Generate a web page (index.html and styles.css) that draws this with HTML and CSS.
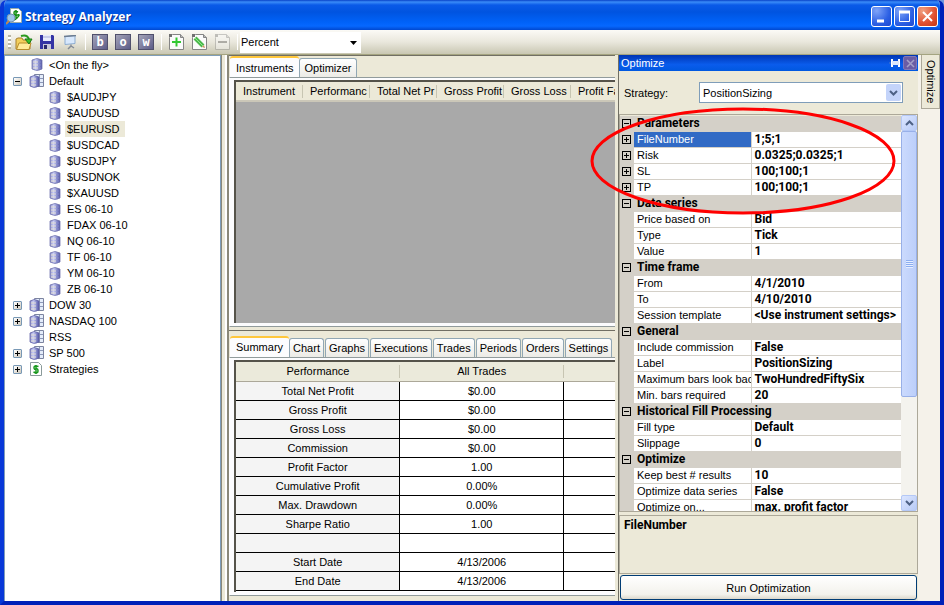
FILE: index.html
```
<!DOCTYPE html>
<html lang="en">
<head>
    <meta charset="utf-8">
    <title>Strategy Analyzer</title>
    <link rel="stylesheet" href="styles.css">
</head>
<body>
    <svg class="defs" width="0" height="0" aria-hidden="true">
        <defs>
            <linearGradient id="steel" x1="0" x2="1" y1="0" y2="0">
                <stop offset="0" stop-color="#8c8ec4"/>
                <stop offset=".35" stop-color="#ccd0f8"/>
                <stop offset="1" stop-color="#5054a4"/>
            </linearGradient>
        </defs>
        <symbol id="db" viewBox="0 0 12 13">
            <path d="M1 2Q6-1 11 2V11Q6 14 1 11Z" fill="url(#steel)" stroke="#7476b0" stroke-width=".8"/>
            <path d="M2 4h5M2 7h5M2 10h5" stroke="#e4e0d4"/>
            <path d="M7 4h3M7 7h3M7 10h3" stroke="#8488cc"/>
        </symbol>
        <symbol id="group" viewBox="0 0 15 14">
            <path d="M5.500.5h9v12h-9z" fill="#e4ecfa" stroke="#7c84a0"/>
            <path d="M10.500 1v11M6 4.500h8M6 8.500h8" stroke="#8c98b8"/>
            <path d="M1 3Q5 0 10 3V12Q5 15 1 12Z" fill="url(#steel)" stroke="#6466a8" stroke-width=".8"/>
            <path d="M2 5h5M2 8h5M2 11h5" stroke="#e4e0d4"/>
        </symbol>
        <symbol id="page" viewBox="0 0 15 16">
            <path d="M3.500.5h8l3 3v12h-14v-12z" fill="#fbfbfb" stroke="#858585"/>
            <path d="M0 0h3v3H0z" fill="#707070"/>
            <path d="M11.500.5v3h3" fill="#bbb" stroke="#858585"/>
        </symbol>
        <symbol id="down" viewBox="0 0 9 6">
            <path d="M1 1l3.500 3.500L8 1" fill="none" stroke="#4d6185" stroke-width="2"/>
        </symbol>
    </svg>

    <div class="window">
        <header class="titlebar">
            <svg class="app-icon" width="16" height="17" viewBox="0 0 16 17">
                <path d="M4.500.5h8l3 3v11h-11z" fill="#fff" stroke="#9aa"/>
                <path d="M12 4Q8 2 8 5t3.500 2T11 10 8 9M10 2v9" fill="none" stroke="#159015" stroke-width="1.500"/>
                <circle cx="5" cy="10" r="4" fill="#9ec6e8" stroke="#7795b0"/>
                <path d="M3 13L0 16" stroke="#c08850" stroke-width="2"/>
            </svg>
            <h1>Strategy Analyzer</h1>
            <div class="window-buttons">
                <button class="win-btn" aria-label="Minimize"><svg width="13" height="13"><path d="M2 11h7" stroke="#fff" stroke-width="3"/></svg></button>
                <button class="win-btn" aria-label="Maximize"><svg width="13" height="13"><path d="M1.500 2v9.500h10V2M1 2.500h11" fill="none" stroke="#fff"/><path d="M1 2h11" stroke="#fff" stroke-width="3"/></svg></button>
                <button class="win-btn win-close" aria-label="Close"><svg width="13" height="13"><path d="M2 2l9 9M11 2l-9 9" stroke="#fff" stroke-width="2"/></svg></button>
            </div>
        </header>

        <div class="toolbar">
            <span class="grip"></span>
            <button class="tool" aria-label="Open"><svg width="18" height="17" viewBox="0 0 18 17"><path d="M1 15V5l2-1h4l1 2h7v9z" fill="#f3cf5c" stroke="#a8802c"/><path d="M1.500 15.500L4 9h12l-2 6.500z" fill="#ffeb9a" stroke="#b88c2c"/><path d="M6 2Q12 0 14 5" fill="none" stroke="#2c9a20" stroke-width="2"/><path d="M10 5h7l-3 5z" fill="#3cc028" stroke="#187a18"/></svg></button>
            <button class="tool" aria-label="Save"><svg width="14" height="14" viewBox="0 0 14 14"><path d="M0 0h13l1 1v13H0z" fill="#3434a4"/><path d="M3 0h8v6H3z" fill="#e8ecfc"/><path d="M3 2h8" stroke="#a8acd8"/><path d="M3 9h8v5H3z" fill="#c8c8d8"/><path d="M4 10h3v4H4z" fill="#28286c"/></svg></button>
            <button class="tool" aria-label="Display"><svg width="14" height="15" viewBox="0 0 14 15"><path d="M2 1.500l10-1v8l-10 1z" fill="#d8e8fc" stroke="#8cacd0"/><path d="M1 1.500l12-1" stroke="#6c7c90" stroke-width="1.500"/><path d="M8 9.500v2M5 14l3-3 3 2" fill="none" stroke="#848c98" stroke-width="1.500"/></svg></button>
            <span class="separator"></span>
            <button class="tool letter">b</button>
            <button class="tool letter">o</button>
            <button class="tool letter">w</button>
            <span class="separator"></span>
            <button class="tool" aria-label="Add"><svg width="15" height="16" viewBox="0 0 15 16"><use href="#page"/><path d="M3 8h9M7.500 3.500v9" stroke="#32c832" stroke-width="2"/></svg></button>
            <button class="tool" aria-label="Edit"><svg width="15" height="16" viewBox="0 0 15 16"><use href="#page"/><path d="M3 4l8 8" stroke="#4cb84c" stroke-width="4"/><path d="M3 4l8 8" stroke="#8ce88c"/><path d="M10 13l3 1-1-3z" fill="#d09060"/></svg></button>
            <button class="tool faded" aria-label="Remove"><svg width="15" height="16" viewBox="0 0 15 16"><use href="#page"/><path d="M3 8h9" stroke="#555" stroke-width="2"/></svg></button>
            <span class="separator"></span>
            <div class="unit-select">
                <select aria-label="Display unit"><option>Percent</option></select>
                <svg width="7" height="4"><path d="M0 0h7L3.500 4z"/></svg>
            </div>
        </div>

        <div class="workspace">
            <nav class="tree">
                <ul>
                    <li><span class="node"><span class="toggle-space"></span><svg class="icon"><use href="#db" x="2" width="12" height="13"/></svg><span class="name">&lt;On the fly&gt;</span></span></li>
                    <li><span class="node"><button class="toggle minus" aria-label="Collapse"></button><svg class="icon"><use href="#group" width="15" height="14"/></svg><span class="name">Default</span></span>
                        <ul class="children">
                            <li class="node"><svg class="icon small"><use href="#db"/></svg><span class="name">$AUDJPY</span></li>
                            <li class="node"><svg class="icon small"><use href="#db"/></svg><span class="name">$AUDUSD</span></li>
                            <li class="node"><svg class="icon small"><use href="#db"/></svg><span class="name selected">$EURUSD</span></li>
                            <li class="node"><svg class="icon small"><use href="#db"/></svg><span class="name">$USDCAD</span></li>
                            <li class="node"><svg class="icon small"><use href="#db"/></svg><span class="name">$USDJPY</span></li>
                            <li class="node"><svg class="icon small"><use href="#db"/></svg><span class="name">$USDNOK</span></li>
                            <li class="node"><svg class="icon small"><use href="#db"/></svg><span class="name">$XAUUSD</span></li>
                            <li class="node"><svg class="icon small"><use href="#db"/></svg><span class="name">ES 06-10</span></li>
                            <li class="node"><svg class="icon small"><use href="#db"/></svg><span class="name">FDAX 06-10</span></li>
                            <li class="node"><svg class="icon small"><use href="#db"/></svg><span class="name">NQ 06-10</span></li>
                            <li class="node"><svg class="icon small"><use href="#db"/></svg><span class="name">TF 06-10</span></li>
                            <li class="node"><svg class="icon small"><use href="#db"/></svg><span class="name">YM 06-10</span></li>
                            <li class="node"><svg class="icon small"><use href="#db"/></svg><span class="name">ZB 06-10</span></li>
                        </ul>
                    </li>
                    <li><span class="node"><button class="toggle" aria-label="Expand"></button><svg class="icon"><use href="#group" width="15" height="14"/></svg><span class="name">DOW 30</span></span></li>
                    <li><span class="node"><button class="toggle" aria-label="Expand"></button><svg class="icon"><use href="#group" width="15" height="14"/></svg><span class="name">NASDAQ 100</span></span></li>
                    <li><span class="node"><span class="toggle-space"></span><svg class="icon"><use href="#group" width="15" height="14"/></svg><span class="name">RSS</span></span></li>
                    <li><span class="node"><button class="toggle" aria-label="Expand"></button><svg class="icon"><use href="#group" width="15" height="14"/></svg><span class="name">SP 500</span></span></li>
                    <li><span class="node"><button class="toggle" aria-label="Expand"></button><svg class="icon" viewBox="0 0 15 14"><path d="M1.500.5h8l3 3v10h-11z" fill="#fff" stroke="#8a9a9a"/><path d="M9.500 4.500Q5 3 5 5.500T7 7t2 2-4.500 1M7 3v9" fill="none" stroke="#18981c" stroke-width="1.500"/></svg><span class="name">Strategies</span></span></li>
                </ul>
            </nav>

            <div class="splitter"></div>

            <main class="center">
                <section class="pane instruments">
                    <div class="tabs">
                        <button class="tab active">Instruments</button>
                        <button class="tab">Optimizer</button>
                    </div>
                    <div class="sheet">
                        <div class="well gray">
                            <table class="columns">
                                <tr><th>Instrument</th><th>Performanc</th><th>Total Net Pr</th><th>Gross Profit</th><th>Gross Loss</th><th>Profit Fa</th></tr>
                            </table>
                        </div>
                    </div>
                </section>
                <section class="pane results">
                    <div class="tabs">
                        <button class="tab active">Summary</button>
                        <button class="tab">Chart</button>
                        <button class="tab">Graphs</button>
                        <button class="tab">Executions</button>
                        <button class="tab">Trades</button>
                        <button class="tab">Periods</button>
                        <button class="tab">Orders</button>
                        <button class="tab">Settings</button>
                    </div>
                    <div class="sheet">
                        <div class="well">
                            <table class="summary">
                                <thead><tr><th>Performance</th><th>All Trades</th><th></th></tr></thead>
                                <tbody>
                                    <tr><th>Total Net Profit</th><td>$0.00</td><td></td></tr>
                                    <tr><th>Gross Profit</th><td>$0.00</td><td></td></tr>
                                    <tr><th>Gross Loss</th><td>$0.00</td><td></td></tr>
                                    <tr><th>Commission</th><td>$0.00</td><td></td></tr>
                                    <tr><th>Profit Factor</th><td>1.00</td><td></td></tr>
                                    <tr><th>Cumulative Profit</th><td>0.00%</td><td></td></tr>
                                    <tr><th>Max. Drawdown</th><td>0.00%</td><td></td></tr>
                                    <tr><th>Sharpe Ratio</th><td>1.00</td><td></td></tr>
                                    <tr><th></th><td></td><td></td></tr>
                                    <tr><th>Start Date</th><td>4/13/2006</td><td></td></tr>
                                    <tr><th>End Date</th><td>4/13/2006</td><td></td></tr>
                                </tbody>
                            </table>
                        </div>
                    </div>
                </section>
            </main>

            <aside class="optimize">
                <div class="panel-title">
                    <h2>Optimize</h2>
                    <button class="pin" aria-label="Auto hide"><svg width="11" height="10"><path d="M0 5h3" stroke="#4a78c8"/><path d="M3 1v8M10 1v8" stroke="#fff" stroke-width="2"/><path d="M3 3h7v4H3z" fill="#dce8fc"/></svg></button>
                    <button class="panel-close" aria-label="Close panel"><svg width="9" height="9"><path d="M1 1l7 7M8 1L1 8" stroke="#a4a0c8" stroke-width="1.500"/></svg></button>
                </div>
                <div class="strategy">
                    <label for="strategy">Strategy:</label>
                    <div class="strategy-select">
                        <select id="strategy"><option>PositionSizing</option></select>
                        <span class="arrow"><svg width="9" height="6"><use href="#down"/></svg></span>
                    </div>
                </div>
                <div class="properties">
                    <div class="property-view">
                        <table class="property-grid">
                            <colgroup><col class="col-gutter"><col class="col-name"><col></colgroup>
                            <tr class="category"><td class="gutter"><button class="box minus" aria-label="Collapse"></button></td><th colspan="2">Parameters</th></tr>
                            <tr class="current"><td class="gutter"><button class="box" aria-label="Expand"></button></td><td>FileNumber</td><td class="value">1;5;1</td></tr>
                            <tr><td class="gutter"><button class="box" aria-label="Expand"></button></td><td>Risk</td><td class="value">0.0325;0.0325;1</td></tr>
                            <tr><td class="gutter"><button class="box" aria-label="Expand"></button></td><td>SL</td><td class="value">100;100;1</td></tr>
                            <tr><td class="gutter"><button class="box" aria-label="Expand"></button></td><td>TP</td><td class="value">100;100;1</td></tr>
                            <tr class="category"><td class="gutter"><button class="box minus" aria-label="Collapse"></button></td><th colspan="2">Data series</th></tr>
                            <tr><td class="gutter"></td><td>Price based on</td><td class="value">Bid</td></tr>
                            <tr><td class="gutter"></td><td>Type</td><td class="value">Tick</td></tr>
                            <tr><td class="gutter"></td><td>Value</td><td class="value">1</td></tr>
                            <tr class="category"><td class="gutter"><button class="box minus" aria-label="Collapse"></button></td><th colspan="2">Time frame</th></tr>
                            <tr><td class="gutter"></td><td>From</td><td class="value">4/1/2010</td></tr>
                            <tr><td class="gutter"></td><td>To</td><td class="value">4/10/2010</td></tr>
                            <tr><td class="gutter"></td><td>Session template</td><td class="value">&lt;Use instrument settings&gt;</td></tr>
                            <tr class="category"><td class="gutter"><button class="box minus" aria-label="Collapse"></button></td><th colspan="2">General</th></tr>
                            <tr><td class="gutter"></td><td>Include commission</td><td class="value">False</td></tr>
                            <tr><td class="gutter"></td><td>Label</td><td class="value">PositionSizing</td></tr>
                            <tr><td class="gutter"></td><td>Maximum bars look back</td><td class="value">TwoHundredFiftySix</td></tr>
                            <tr><td class="gutter"></td><td>Min. bars required</td><td class="value">20</td></tr>
                            <tr class="category"><td class="gutter"><button class="box minus" aria-label="Collapse"></button></td><th colspan="2">Historical Fill Processing</th></tr>
                            <tr><td class="gutter"></td><td>Fill type</td><td class="value">Default</td></tr>
                            <tr><td class="gutter"></td><td>Slippage</td><td class="value">0</td></tr>
                            <tr class="category"><td class="gutter"><button class="box minus" aria-label="Collapse"></button></td><th colspan="2">Optimize</th></tr>
                            <tr><td class="gutter"></td><td>Keep best # results</td><td class="value">10</td></tr>
                            <tr><td class="gutter"></td><td>Optimize data series</td><td class="value">False</td></tr>
                            <tr><td class="gutter"></td><td>Optimize on...</td><td class="value">max. profit factor</td></tr>
                        </table>
                    </div>
                    <div class="scrollbar">
                        <button class="scroll-btn" aria-label="Scroll up"><svg class="up" width="9" height="6"><use href="#down"/></svg></button>
                        <div class="track"><div class="thumb"><span class="thumb-grip"></span></div></div>
                        <button class="scroll-btn" aria-label="Scroll down"><svg width="9" height="6"><use href="#down"/></svg></button>
                    </div>
                </div>
                <div class="description">FileNumber</div>
                <button class="run">Run Optimization</button>
                <svg class="marker" viewBox="0 0 306 108"><ellipse cx="153" cy="54" rx="151" ry="52"/></svg>
            </aside>

            <div class="dock">
                <button class="dock-tab">Optimize</button>
            </div>
        </div>
    </div>
</body>
</html>
```
FILE: styles.css
```
* {
    box-sizing: border-box;
}

body {
    margin: 0;
    background: #6f96dc;
    color: #000;
    font-family: "Liberation Sans", Arial, sans-serif;
    font-size: 11px;
    line-height: 16px;
}

button, select {
    font: inherit;
    color: inherit;
    margin: 0;
    padding: 0;
    border: 0;
    border-radius: 0;
    background: none;
}

select {
    appearance: none;
    width: 100%;
    height: 100%;
}

svg {
    display: block;
    flex: none;
}

h1, h2 {
    margin: 0;
}

table {
    border-collapse: collapse;
    table-layout: fixed;
}

.defs {
    position: absolute;
}

.window {
    display: flex;
    flex-direction: column;
    height: 100vh;
    border: solid #0a3fe0;
    border-width: 0 4px 4px;
    border-color: #0a3fe0 #0020b8 #0020b8 #0838d8;
    border-radius: 7px 7px 0 0;
    overflow: hidden;
    background: #ece9d8;
}

/* title bar */

.titlebar {
    display: flex;
    align-items: center;
    flex: none;
    height: 30px;
    margin: 0 -4px;
    padding: 3px 6px 0 6px;
    background: linear-gradient(#0842c8 0, #3a8cf8 2px, #0a5ae8 5px, #0054e0 12px, #0062f8 22px, #0668ff 26px, #0048d0 100%);
}

h1 {
    flex: 1;
    margin-left: 3px;
    color: #fff;
    font-family: "Open Sans", "Trebuchet MS", sans-serif;
    font-size: 12px;
    font-weight: bold;
    text-shadow: 1px 1px #0c2f94;
}

.window-buttons {
    display: flex;
    gap: 2px;
}

.win-btn {
    display: flex;
    align-items: center;
    justify-content: center;
    width: 21px;
    height: 21px;
    border: 1px solid #fff;
    border-radius: 3px;
    background: radial-gradient(circle at 25% 20%, #7fa4f8, #2c60e4 60%, #1c48d0);
}

.win-close {
    background: radial-gradient(circle at 25% 20%, #f0a080, #e05030 60%, #c03814);
}

/* toolbar */

.toolbar {
    display: flex;
    align-items: center;
    flex: none;
    height: 25px;
    border-bottom: 1px solid #a4a480;
    background: linear-gradient(#fbfaf6, #e9e7dc 50%, #c9c7b2);
}

.grip {
    width: 3px;
    height: 14px;
    margin: 0 5px 0 4px;
    background: repeating-linear-gradient(#b8b5a4 0 2px, #fff 2px 4px);
}

.tool {
    display: flex;
    align-items: center;
    justify-content: center;
    width: 16px;
    height: 16px;
    margin-right: 7px;
}

.letter {
    border: 1px solid #50506c;
    background: linear-gradient(135deg, #a4a4b8, #5c5c88);
    color: #fff;
    font-family: "DejaVu Sans Mono", monospace;
    font-size: 12px;
    font-weight: bold;
    line-height: 13px;
}

.faded {
    opacity: 0.4;
}

.separator {
    width: 1px;
    height: 16px;
    margin-right: 6px;
    background: #fff;
}

.unit-select {
    position: relative;
    width: 121px;
    height: 21px;
    margin-left: -4px;
    background: #fff;
}

.unit-select select {
    padding-left: 1px;
}

.unit-select svg {
    position: absolute;
    right: 4px;
    top: 9px;
    pointer-events: none;
}

/* main area */

.workspace {
    display: grid;
    grid-template-columns: 217px 8px minmax(0, 1fr) 300px 22px;
    flex: 1;
    min-height: 0;
}

.tree {
    overflow: hidden;
    padding-top: 1px;
    border: 1px solid #7f9db9;
    border-width: 1px 1px 0 1px;
    background: #fff;
}

.tree ul {
    margin: 0;
    padding: 0;
    list-style: none;
}

.tree .children {
    padding-left: 44px;
}

.node {
    display: flex;
    align-items: center;
    height: 16px;
    white-space: nowrap;
}

.toggle, .toggle-space {
    width: 9px;
    height: 9px;
    margin: 0 7px 0 8px;
}

.toggle {
    border: 1px solid #7898b5;
    border-radius: 1px;
    background:
        linear-gradient(#000, #000) center / 5px 1px no-repeat,
        linear-gradient(#000, #000) center / 1px 5px no-repeat,
        linear-gradient(135deg, #fff, #cfc9bc);
}

.toggle.minus {
    background:
        linear-gradient(#000, #000) center / 5px 1px no-repeat,
        linear-gradient(135deg, #fff, #cfc9bc);
}

.icon {
    width: 15px;
    height: 14px;
    margin-right: 3px;
}

.icon.small {
    width: 12px;
    height: 13px;
    margin-right: 4px;
}

.name {
    height: 16px;
    padding: 0 2px;
}

.name.selected {
    padding-right: 5px;
    background: #ece9d8;
}

.splitter {
    border-left: 1px solid #8a8878;
    border-right: 2px solid #8a8878;
    background: #ece9d8;
    box-shadow: inset -2px 0 #fff;
}

.center {
    display: flex;
    flex-direction: column;
    margin-right: 3px;
    overflow: hidden;
}

.pane {
    display: flex;
    flex-direction: column;
    border-top: 1px solid #716f64;
    background: #ece9d8;
}

.instruments {
    flex: 1;
    min-height: 0;
}

.results {
    flex: none;
    margin-top: 3px;
    padding: 5px 0;
}

.tabs {
    display: flex;
    align-items: flex-end;
    height: 21px;
    padding-left: 1px;
    white-space: nowrap;
}

.tab {
    flex: none;
    height: 19px;
    margin-right: 1px;
    padding: 0 4px;
    border: 1px solid #91a7b4;
    border-bottom: 0;
    border-radius: 3px 3px 0 0;
    background: linear-gradient(#fff, #ecebe6);
}

.results .tab:not(.active) {
    padding: 0 3px;
}

.tab.active {
    height: 21px;
    margin-right: 0;
    padding: 0 6px;
    border-width: 2px 0 0;
    border-color: #ffc73c;
    background: #fcfcfe;
}

.sheet {
    flex: 1;
    min-height: 0;
    padding: 2px 0 3px 4px;
    border: 1px solid #919b9c;
    border-right: 0;
    border-left-color: #fff;
    background: #fcfcfe;
}

.well {
    height: 100%;
    overflow: hidden;
    border: 2px solid #55534a;
    border-width: 2px 0 0 2px;
    background: #fff;
}

.well.gray {
    background: #a9a9a9;
}

.columns {
    width: 402px;
    background: #ece9d8;
    border-bottom: 2px solid #cbc7b8;
}

.columns th {
    height: 19px;
    padding: 0 0 0 7px;
    font-weight: normal;
    text-align: left;
    white-space: nowrap;
    overflow: hidden;
    background: linear-gradient(#c7c5b2, #c7c5b2) right center / 1px 13px no-repeat;
}

.summary {
    width: 492px;
    margin-bottom: 1px;
}

.summary th, .summary td {
    height: 19px;
    padding: 0;
    border: 1px solid #000;
    border-left-width: 0;
    font-weight: normal;
    text-align: center;
    line-height: 17px;
    background: #fff;
}

.summary tbody th {
    background: #f4f4f4;
}

.summary thead th {
    height: 20px;
    border: 0;
    border-bottom: 1px solid #aca899;
    background: linear-gradient(#c7c5b2, #c7c5b2) right center / 1px 13px no-repeat #ebeadb;
}

/* optimize panel */

.optimize {
    position: relative;
    display: flex;
    flex-direction: column;
    min-height: 0;
    border-left: 1px solid #716f64;
    background: #ece9d8;
}

.panel-title {
    display: flex;
    align-items: center;
    flex: none;
    height: 16px;
    padding: 0 1px 0 2px;
    background: linear-gradient(#0036b4, #0a5cec 60%, #0058e0);
    color: #fff;
}

h2 {
    flex: 1;
    font-size: 11px;
    font-weight: normal;
}

.panel-close {
    display: flex;
    align-items: center;
    justify-content: center;
    width: 14px;
    height: 14px;
    margin-left: 3px;
    border: 1px solid #8078b8;
    border-radius: 2px;
    background: #6a5ca4;
}

.strategy {
    display: flex;
    align-items: center;
    flex: none;
    height: 43px;
    padding: 0 15px 0 5px;
}

.strategy label {
    width: 75px;
}

.strategy-select {
    position: relative;
    flex: 1;
    height: 21px;
    border: 1px solid #7f9db9;
    background: #fff;
}

.strategy-select select {
    padding-left: 3px;
}

.arrow {
    position: absolute;
    top: 1px;
    right: 1px;
    display: flex;
    align-items: center;
    justify-content: center;
    width: 15px;
    height: 17px;
    border-radius: 2px;
    background: #c4d4fa;
    pointer-events: none;
}

.properties {
    display: flex;
    flex: 1;
    min-height: 0;
    border: 1px solid #aca899;
    background: #fff;
}

.property-view {
    flex: 1;
    min-width: 0;
    overflow: hidden;
}

.property-grid {
    width: 100%;
}

.property-grid td, .property-grid th {
    height: 16px;
    padding: 0 0 0 3px;
    border-bottom: 1px solid #d4d0c8;
    line-height: 15px;
    text-align: left;
    white-space: nowrap;
    overflow: hidden;
}

.col-gutter {
    width: 14px;
}

.col-name {
    width: 117px;
}

.property-grid .gutter {
    padding-left: 2px;
    background: #d4d0c8;
}

.property-grid td:nth-child(2) {
    border-right: 1px solid #d4d0c8;
}

.property-grid th {
    background: #d4d0c8;
}

.property-grid .category td, .property-grid .category th {
    border-top: 1px solid #ece9d8;
}

.property-grid .current td:nth-child(2) {
    background: #316ac5;
    color: #fff;
}

.property-grid th, .property-grid .value, .description {
    font-family: Roboto, "Liberation Sans", sans-serif;
    font-size: 12px;
    font-weight: bold;
}

.box {
    display: block;
    width: 9px;
    height: 9px;
    border: 1px solid #000;
    background:
        linear-gradient(#000, #000) center / 5px 1px no-repeat,
        linear-gradient(#000, #000) center / 1px 5px no-repeat;
}

.box.minus {
    background: linear-gradient(#000, #000) center / 5px 1px no-repeat;
}

.scrollbar {
    display: flex;
    flex-direction: column;
    width: 16px;
    background: #f4f3ee;
}

.scroll-btn {
    display: flex;
    align-items: center;
    justify-content: center;
    flex: none;
    height: 16px;
    border: 1px solid #b4c8f6;
    border-radius: 2px;
    background: linear-gradient(135deg, #dce6ff, #b8cbf6);
}

.up {
    transform: rotate(180deg);
}

.track {
    flex: 1;
}

.thumb {
    display: flex;
    align-items: center;
    justify-content: center;
    height: 73%;
    border: 1px solid #98b0e8;
    border-radius: 2px;
    background: linear-gradient(90deg, #cbdafd, #bccffa);
}

.thumb-grip {
    width: 7px;
    height: 8px;
    background: repeating-linear-gradient(#8caef0 0 1px, #e6eeff 1px 2px);
}

.description {
    flex: none;
    height: 59px;
    margin-top: 3px;
    padding: 1px 4px;
    border: 1px solid #aca899;
}

.run {
    flex: none;
    height: 25px;
    margin: 1px;
    border: 1px solid #003c74;
    border-radius: 3px;
    background: linear-gradient(#fff, #f3f2ec 80%, #dcd8cc);
}

.marker {
    position: absolute;
    left: -29px;
    top: 52px;
    width: 306px;
    height: 108px;
    pointer-events: none;
    z-index: 2;
}

.marker ellipse {
    fill: none;
    stroke: #f00;
    stroke-width: 3px;
}

.dock {
    padding-left: 3px;
    background: #f5f2ea;
}

.dock-tab {
    width: 19px;
    height: 54px;
    border: 1px solid #aca899;
    border-top: 0;
    background: #ece9d8;
    writing-mode: vertical-rl;
}
```
